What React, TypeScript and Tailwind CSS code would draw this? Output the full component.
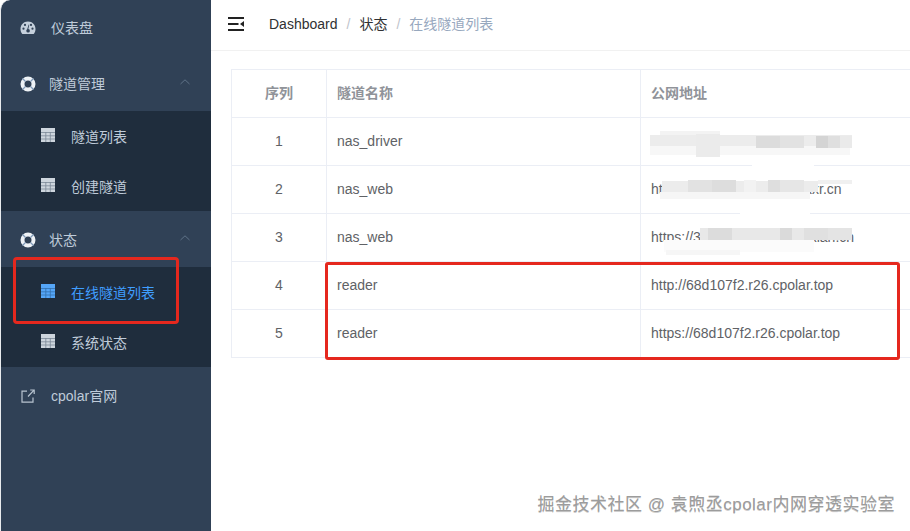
const FONT = "font-['Liberation_Sans','Noto_Sans_CJK_SC',sans-serif]";

function Gauge() {
  return (
    <svg width="16" height="14" viewBox="0 0 16 14" className="shrink-0">
      <path fillRule="evenodd" fill="#c5d0dc" d="M8 0.5C3.6 0.5 0.5 3.8 0.5 8c0 1.7.5 3.2 1.4 4.4.3.4.6.6 1.1.6h10c.5 0 .8-.2 1.1-.6.9-1.2 1.400-2.700 1.400-4.400C15.500 3.800 12.400.5 8 .5zM3.500 8.800a1.100 1.100 0 1 1 0-2.200 1.100 1.100 0 0 1 0 2.200zM5 5a1.100 1.100 0 1 1 0-2.200A1.100 1.100 0 0 1 5 5zm3 6.500a1.700 1.700 0 0 1-.8-3.200L8.700 3.500l.6.200-1 4.400a1.700 1.700 0 0 1-.3 3.400zM11 5a1.100 1.100 0 1 1 0-2.200A1.100 1.100 0 0 1 11 5zm1.500 3.800a1.100 1.100 0 1 1 0-2.200 1.100 1.100 0 0 1 0 2.200z" />
    </svg>
  );
}

function Ring() {
  return (
    <svg width="16" height="16" viewBox="0 0 16 16" className="shrink-0">
      <circle cx="8" cy="8" r="5.500" fill="none" stroke="#eef2f6" strokeWidth="4" />
      <path d="M2.500 2.500 L5.500 5.500 M13.500 2.500 L10.500 5.500 M2.500 13.500 L5.500 10.500 M13.500 13.500 L10.500 10.500" stroke="#7f9ab8" strokeWidth="1.300" />
    </svg>
  );
}

function Grid({ color, line }: { color: string; line: string }) {
  return (
    <svg width="14" height="14" viewBox="0 0 14 14" className="shrink-0">
      <rect x="0" y="0" width="14" height="14" fill={color} />
      <path d="M0 4.500H14M0 7.800H14M0 11H14M4.800 4V14M9.300 4V14" stroke={line} strokeWidth="0.800" opacity="0.75" />
    </svg>
  );
}

function External() {
  return (
    <svg width="14" height="14" viewBox="0 0 14 14" fill="none" stroke="#b8c4d0" strokeWidth="1.200" className="shrink-0">
      <path d="M6 2.200H1v11h11V8.500" />
      <path d="M7 7.500 13 1.200M9.200 1h4v4" />
    </svg>
  );
}

function Chevron() {
  return (
    <svg width="10" height="6" viewBox="0 0 10 6" fill="none" stroke="#5f7287" strokeWidth="1" className="shrink-0 -mt-1">
      <path d="M0.500 5 5 0.800 9.500 5" />
    </svg>
  );
}

function Top({ label }: { label: string }) {
  return (
    <div className="h-14 pt-[2px] flex items-center pl-[19px] gap-[13px] pr-[21px] text-[14px] text-[#bfcbd9]">
      <Ring />
      <span className="flex-1">{label}</span>
      <Chevron />
    </div>
  );
}

function Sub({ label, active }: { label: string; active?: boolean }) {
  return (
    <div className={`h-[50px] pt-[2px] flex items-center pl-10 gap-4 text-[14px] ${active ? 'text-[#409eff]' : 'text-[#bfcbd9]'}`}>
      <div className="-mt-[5px]"><Grid color={active ? '#55a6f8' : '#cdd5dd'} line={active ? '#2a5f96' : '#5f6f80'} /></div>
      <span>{label}</span>
    </div>
  );
}

const ROWS: { n: string; name: string; url: string }[] = [
  { n: '1', name: 'nas_driver', url: 'h' },
  { n: '2', name: 'nas_web', url: 'http://xxxxxxxxxxxxxxxxxxxr.cn' },
  { n: '3', name: 'nas_web', url: 'https://3xxxxxxxxxxxxxxx.xian.cn' },
  { n: '4', name: 'reader', url: 'http://68d107f2.r26.cpolar.top' },
  { n: '5', name: 'reader', url: 'https://68d107f2.r26.cpolar.top' },
];

const MOSAIC: [number, number, number, number, string][] = [
  // row 1
  [650, 146, 200, 9, '#f7f7f7'], [660, 131, 60, 8, '#f3f3f3'], [650, 135, 202, 11, '#ececec'], [696, 134, 24, 23, '#ebebeb'],
  [756, 136, 24, 12, '#dcdcdc'], [780, 136, 24, 12, '#e2e2e2'], [816, 136, 12, 12, '#d4d4d4'], [828, 136, 12, 12, '#dfdfdf'], [840, 136, 12, 12, '#eaeaea'],
  // row 2
  [660, 192, 150, 7, '#f6f6f6'], [662, 181, 156, 11, '#ececec'], [688, 180, 24, 12, '#e2e2e2'], [712, 180, 24, 12, '#dddddd'],
  [768, 180, 12, 12, '#dedede'], [744, 180, 12, 12, '#f2f2f2'], [780, 180, 24, 12, '#e6e6e6'], [818, 180, 34, 4, '#f0f0f0'],
  // row 3
  [700, 228, 152, 12, '#e8e8e8'], [708, 228, 24, 12, '#dcdcdc'], [780, 228, 12, 12, '#dadada'], [804, 228, 24, 12, '#e0e0e0'], [828, 228, 24, 12, '#e4e4e4'],
  [664, 240, 150, 12, '#fbfbfb'], [666, 250, 74, 5, '#f6f6f6'],
  // white smears crossing the row lines
  [752, 160, 62, 8, '#ffffff'], [740, 199, 70, 16, '#ffffff'],
];

export default function App() {
  return (
    <div className={`${FONT} relative w-[910px] h-[531px] overflow-hidden bg-white flex`}>
      <aside className="w-[211px] h-full shrink-0 bg-[#304156] border-l border-[#e8ebee] rounded-tl-[10px] flex flex-col">
        <div className="flex h-[55px] pt-[1px] items-center pl-[19px] gap-[15px] text-[14px] text-[#bfcbd9]">
          <Gauge />
          <span>仪表盘</span>
        </div>
        <Top label="隧道管理" />
        <div className="bg-[#1f2d3d]">
          <Sub label="隧道列表" />
          <Sub label="创建隧道" />
        </div>
        <Top label="状态" />
        <div className="bg-[#1f2d3d]">
          <Sub label="在线隧道列表" active />
          <Sub label="系统状态" />
        </div>
        <div className="flex h-[58px] items-center pl-5 gap-4 text-[14px] text-[#bfcbd9]">
          <External />
          <span>cpolar官网</span>
        </div>
      </aside>

      <main className="flex-1 min-w-0 flex flex-col">
        <header className="h-[51px] shrink-0 pb-[2px] border-b border-[#f1f1f1] flex items-center pl-[17px] text-[14px]">
          <svg width="16" height="14" viewBox="0 0 16 14" className="shrink-0">
            <path d="M0 1H16M0 7H10.500M0 13H16" stroke="#222" strokeWidth="2" />
            <path d="M16 4V10L12 7Z" fill="#222" />
          </svg>
          <span className="ml-[25px] text-[#303133]">Dashboard</span>
          <span className="mx-[9px] text-[#c0c4cc]">/</span>
          <span className="text-[#303133]">状态</span>
          <span className="mx-[9px] text-[#c0c4cc]">/</span>
          <span className="text-[#97a8be]">在线隧道列表</span>
        </header>

        <div className="pl-5 pt-[18px]">
          <div className="w-[720px] border border-[#ebeef5] border-r-0 text-[14px]">
            <div className="h-12 flex items-center border-b border-[#ebeef5] font-bold text-[#909399]">
              <div className="w-[95px] h-full shrink-0 flex items-center justify-center border-r border-[#ebeef5]">序列</div>
              <div className="w-[314px] h-full shrink-0 flex items-center pl-[10px] border-r border-[#ebeef5]">隧道名称</div>
              <div className="flex-1 pl-[10px]">公网地址</div>
            </div>
            {ROWS.map((r, i) => (
              <div key={r.n} className={`flex items-center text-[#606266] ${i < 4 ? 'h-12 border-b border-[#ebeef5]' : 'h-[47px]'}`}>
                <div className="w-[95px] h-full shrink-0 flex items-center justify-center border-r border-[#ebeef5]">{r.n}</div>
                <div className="w-[314px] h-full shrink-0 flex items-center pl-[10px] border-r border-[#ebeef5]">{r.name}</div>
                <div className="flex-1 pl-[10px] whitespace-nowrap">{r.url}</div>
              </div>
            ))}
          </div>
        </div>
      </main>

      {/* redaction smears over the table */}
      {MOSAIC.map(([x, y, w, h, c], i) => (
        <div key={i} className="absolute" style={{ left: x, top: y, width: w, height: h, background: c }} />
      ))}

      {/* red annotation boxes */}
      <div className="absolute left-[13px] top-[257px] w-[166px] h-[67px] border-[3px] border-[#e5281e] rounded-[4px]" />
      <div className="absolute left-[325px] top-[262px] w-[575px] h-[98px] border-[3px] border-[#e5281e] rounded-[3px]" />

      {/* watermark */}
      <div className="absolute right-[15px] bottom-[15px] text-[17px] leading-[22px] tracking-[0.500px] text-[#9c9c9c] [text-shadow:0_1px_0_rgba(0,0,0,0.2)]">
        掘金技术社区 @ 袁煦丞cpolar内网穿透实验室
      </div>
    </div>
  );
}
